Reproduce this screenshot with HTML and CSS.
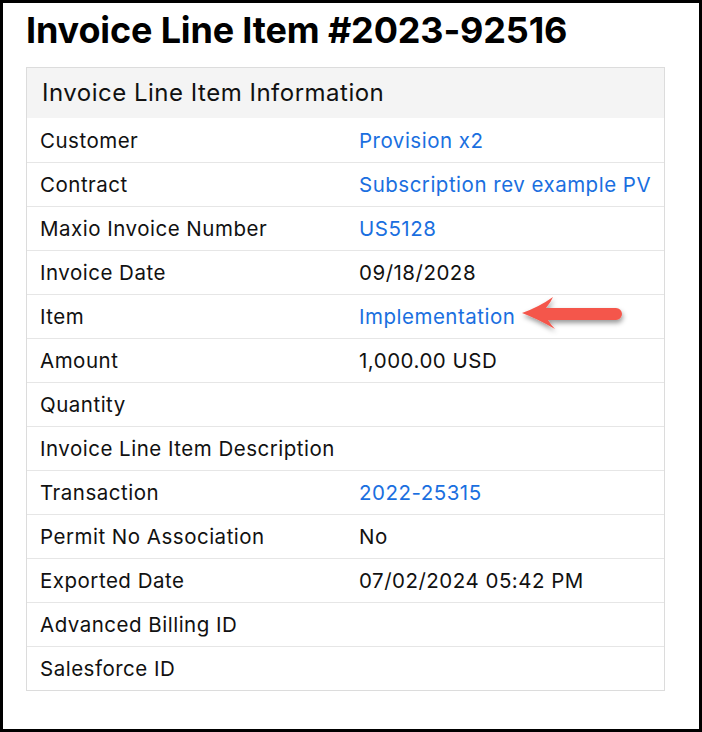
FILE: index.html
```html
<!DOCTYPE html>
<html lang="en">
<head>
  <meta charset="UTF-8" />
  <title>Invoice Line Item #2023-92516</title>
  <link rel="stylesheet" href="styles.css">
</head>
<body>
  <div class="frame">
    <h1>Invoice Line Item #2023-92516</h1>

    <div class="info-box">
      <div class="info-header">Invoice Line Item Information</div>
      <div class="info-row">
        <span class="label">Customer</span>
        <span class="value"><a href="#">Provision x2</a></span>
      </div>
      <div class="info-row">
        <span class="label">Contract</span>
        <span class="value"><a href="#">Subscription rev example PV</a></span>
      </div>
      <div class="info-row">
        <span class="label">Maxio Invoice Number</span>
        <span class="value"><a href="#">US5128</a></span>
      </div>
      <div class="info-row">
        <span class="label">Invoice Date</span>
        <span class="value">09/18/2028</span>
      </div>
      <div class="info-row has-arrow">
        <span class="label">Item</span>
        <span class="value"><a href="#">Implementation</a></span>
        <!-- callout arrow pointing at the item link -->
        <svg class="arrow" width="116" height="50" viewBox="0 0 116 50">
          <defs>
            <filter id="shadow" x="-20%" y="-30%" width="150%" height="180%">
              <feDropShadow dx="1" dy="3" stdDeviation="2.5" flood-color="#000" flood-opacity="0.4"/>
            </filter>
          </defs>
          <path filter="url(#shadow)" fill="#f4574c"
            d="M7 24 Q24 18 38 8 Q36 13 31 19 L101 19 A6 6 0 0 1 101 31 L33 31 Q36 36 40 40 Q23 30 7 24 Z"/>
        </svg>
      </div>
      <div class="info-row">
        <span class="label">Amount</span>
        <span class="value">1,000.00 USD</span>
      </div>
      <div class="info-row">
        <span class="label">Quantity</span>
        <span class="value"></span>
      </div>
      <div class="info-row">
        <span class="label">Invoice Line Item Description</span>
        <span class="value"></span>
      </div>
      <div class="info-row">
        <span class="label">Transaction</span>
        <span class="value"><a href="#">2022-25315</a></span>
      </div>
      <div class="info-row">
        <span class="label">Permit No Association</span>
        <span class="value">No</span>
      </div>
      <div class="info-row">
        <span class="label">Exported Date</span>
        <span class="value">07/02/2024 05:42 PM</span>
      </div>
      <div class="info-row">
        <span class="label">Advanced Billing ID</span>
        <span class="value"></span>
      </div>
      <div class="info-row">
        <span class="label">Salesforce ID</span>
        <span class="value"></span>
      </div>
    </div>
  </div>
</body>
</html>
```

FILE: styles.css
```css
* {
  box-sizing: border-box;
}

body {
  margin: 0;
  font-family: Inter, 'Noto Sans', sans-serif;
  color: #111;
  background: #fff;
}

.frame {
  width: 702px;
  height: 732px;
  border: 3px solid #000;
  padding: 6px 0 0 23px;
}

h1 {
  margin: 0 0 16px;
  font-size: 36px;
  font-weight: 700;
  line-height: 42px;
  color: #000;
  letter-spacing: -0.15px;
}

.info-box {
  width: 639px;
  border: 1px solid #dcdcdc;
}

.info-header {
  background-color: #f4f4f4;
  height: 50px;
  padding: 0 15px;
  font-size: 24px;
  line-height: 50px;
  letter-spacing: 0.5px;
  color: #111;
}

.info-row {
  display: flex;
  height: 44px;
  align-items: center;
  border-top: 1px solid #e6e6e6;
  font-size: 20.5px;
  letter-spacing: 0.5px;
}

.info-header + .info-row {
  border-top: none;
}

.label {
  width: 332px;
  padding-left: 13px;
}

.value {
  flex: 1;
}

.value a {
  color: #1a6fe0;
  text-decoration: none;
}

.has-arrow {
  position: relative;
}

.arrow {
  position: absolute;
  left: 488px;
  top: -6px;
}
```
